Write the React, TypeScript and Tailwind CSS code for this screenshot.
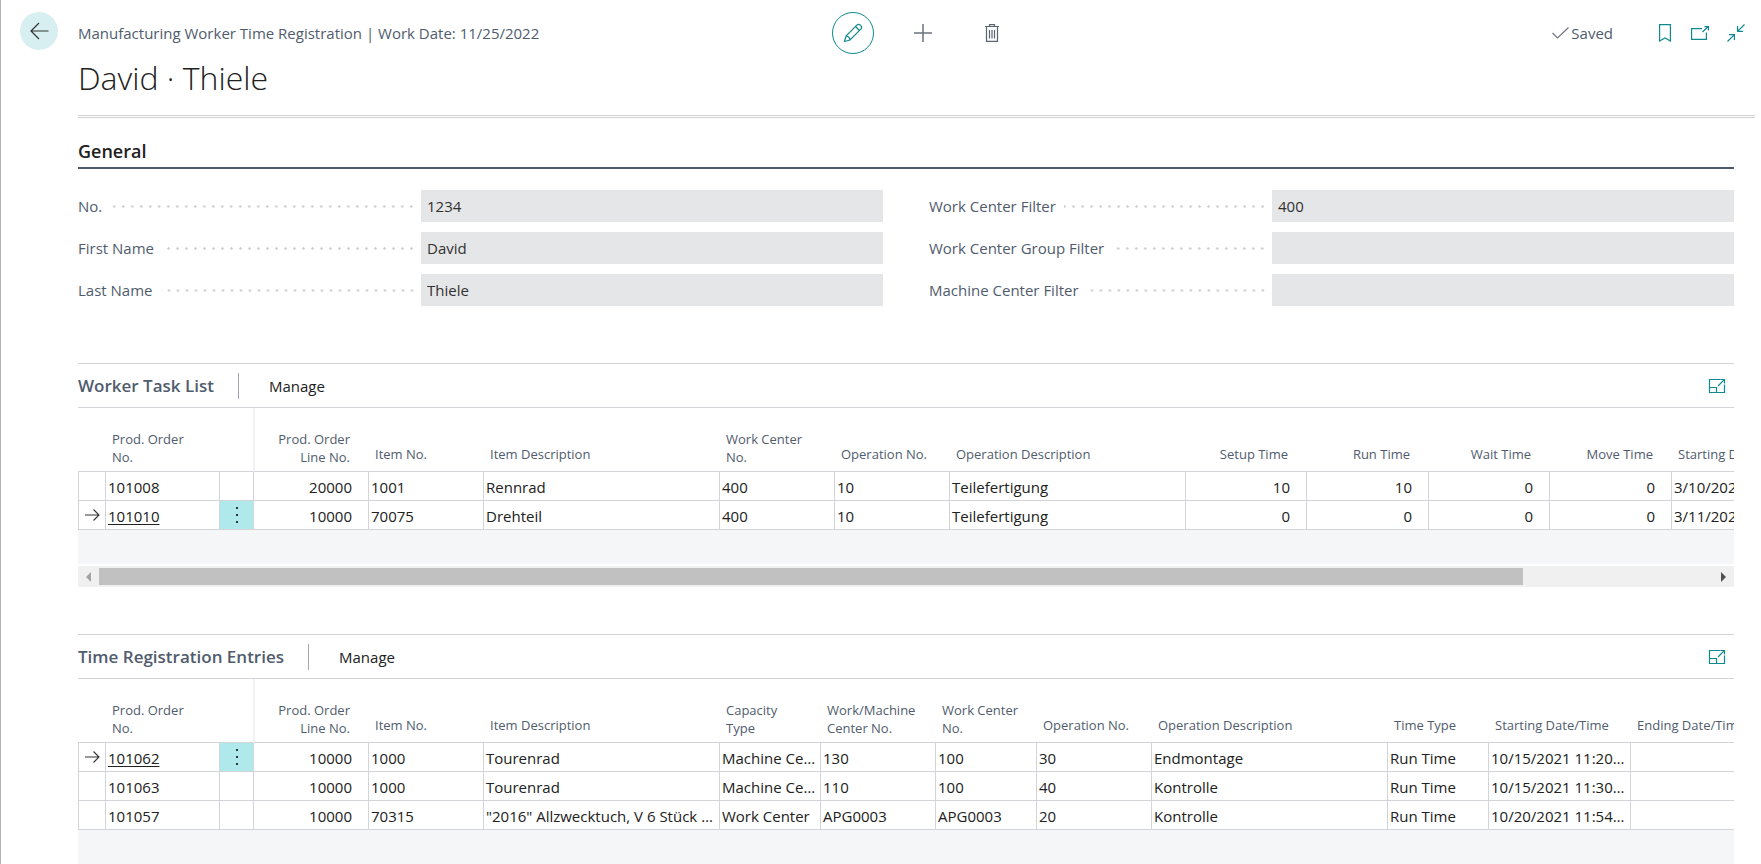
import { useState } from "react";
import clsx from "clsx";

type Column = {
  title: string[];
  width: string;
  align?: "right";
};

type Row = {
  no: string;
  cells: string[];
};

const taskColumns: Column[] = [
  { title: ["Prod. Order", "Line No."], width: "w-[115px]", align: "right" },
  { title: ["Item No."], width: "w-[115px]" },
  { title: ["Item Description"], width: "w-[236px]" },
  { title: ["Work Center", "No."], width: "w-[115px]" },
  { title: ["Operation No."], width: "w-[115px]" },
  { title: ["Operation Description"], width: "w-[236px]" },
  { title: ["Setup Time"], width: "w-[121px]", align: "right" },
  { title: ["Run Time"], width: "w-[122px]", align: "right" },
  { title: ["Wait Time"], width: "w-[121px]", align: "right" },
  { title: ["Move Time"], width: "w-[122px]", align: "right" },
  { title: ["Starting Date/Time"], width: "w-[142px]" },
];

const taskRows: Row[] = [
  {
    no: "101008",
    cells: ["20000", "1001", "Rennrad", "400", "10", "Teilefertigung", "10", "10", "0", "0", "3/10/2021 8:00"],
  },
  {
    no: "101010",
    cells: ["10000", "70075", "Drehteil", "400", "10", "Teilefertigung", "0", "0", "0", "0", "3/11/2021 8:00"],
  },
];

const entryColumns: Column[] = [
  { title: ["Prod. Order", "Line No."], width: "w-[115px]", align: "right" },
  { title: ["Item No."], width: "w-[115px]" },
  { title: ["Item Description"], width: "w-[236px]" },
  { title: ["Capacity", "Type"], width: "w-[101px]" },
  { title: ["Work/Machine", "Center No."], width: "w-[115px]" },
  { title: ["Work Center", "No."], width: "w-[101px]" },
  { title: ["Operation No."], width: "w-[115px]" },
  { title: ["Operation Description"], width: "w-[236px]" },
  { title: ["Time Type"], width: "w-[101px]" },
  { title: ["Starting Date/Time"], width: "w-[142px]" },
  { title: ["Ending Date/Time"], width: "w-[142px]" },
];

const entryRows: Row[] = [
  {
    no: "101062",
    cells: ["10000", "1000", "Tourenrad", "Machine Center", "130", "100", "30", "Endmontage", "Run Time", "10/15/2021 11:20 AM", ""],
  },
  {
    no: "101063",
    cells: ["10000", "1000", "Tourenrad", "Machine Center", "110", "100", "40", "Kontrolle", "Run Time", "10/15/2021 11:30 AM", ""],
  },
  {
    no: "101057",
    cells: ["10000", "70315", "\"2016\" Allzwecktuch, V 6 Stück Pack", "Work Center", "APG0003", "APG0003", "20", "Kontrolle", "Run Time", "10/20/2021 11:54 AM", ""],
  },
];

const leftFields = [
  { id: "no", label: "No.", value: "1234" },
  { id: "first-name", label: "First Name", value: "David" },
  { id: "last-name", label: "Last Name", value: "Thiele" },
];

const rightFields = [
  { id: "wc-filter", label: "Work Center Filter", value: "400" },
  { id: "wc-group-filter", label: "Work Center Group Filter", value: "" },
  { id: "mc-filter", label: "Machine Center Filter", value: "" },
];

function ExpandIcon() {
  return (
    <svg width="18" height="16" viewBox="0 0 18 16" fill="none" stroke="#0f8a8f" strokeWidth="1.2">
      <path d="M12 1.5H1.5V14.5H16.5V6.5" />
      <path d="M1.5 9.5H8.5V14.5" />
      <path d="M10 8L16 1.8M12.2 1.5H16.5V5.5" />
    </svg>
  );
}

function Field({ id, label, value }: { id: string; label: string; value: string }) {
  return (
    <div className="flex h-8 items-center">
      <div className="flex w-[343px] shrink-0 items-center gap-2 pr-[5px]">
        <label htmlFor={id} className="whitespace-nowrap text-[#505c6d]">
          {label}
        </label>
        <span className="h-[3px] flex-1 bg-[radial-gradient(circle,#cfd1d4_1px,transparent_1.5px)] bg-[length:9px_3px] bg-right bg-repeat-x" />
      </div>
      <input
        id={id}
        readOnly
        defaultValue={value}
        className="h-8 min-w-0 flex-1 bg-[#e5e6e8] px-1.5 text-[#323130] outline-none"
      />
    </div>
  );
}

function ListPart({
  title,
  columns,
  rows,
  initial,
}: {
  title: string;
  columns: Column[];
  rows: Row[];
  initial: string;
}) {
  const [current, setCurrent] = useState(initial);

  return (
    <section>
      <div className="flex h-[45px] items-center border-y border-[#d2d4d7]">
        <h2 className="text-[17px] font-semibold text-[#505c6d]">{title}</h2>
        <span className="mr-[30px] ml-6 h-[26px] w-px bg-[#a3a8b0]" />
        <button type="button" className="text-[#212121]">
          Manage
        </button>
        <button type="button" aria-label={`Expand ${title}`} className="mr-2 ml-auto">
          <ExpandIcon />
        </button>
      </div>
      <div className="overflow-hidden bg-[#f5f6f8] pb-[34px]">
        <table className="w-[1800px] table-fixed border-separate border-spacing-0 bg-white">
          <thead>
            <tr className="h-16 text-left align-bottom text-[13px] leading-[18px] text-[#505c6d]">
              <th className="w-[27px] border-b border-[#d2d4d7]" />
              <th className="w-[114px] border-b border-[#d2d4d7] pb-[5px] pl-[7px] font-normal">
                Prod. Order
                <br />
                No.
              </th>
              <th className="w-[34px] border-b border-[#d2d4d7]" />
              {columns.map(({ title, width, align }, i) => (
                <th
                  key={i}
                  className={clsx(
                    "border-b border-b-[#d2d4d7] font-normal whitespace-nowrap",
                    width,
                    align === "right" ? "pr-[18px] text-right" : "pl-[7px]",
                    title.length > 1 ? "pb-[5px]" : "pb-2",
                    i === 0 && "border-l-2 border-l-[#f1f2f4]"
                  )}
                >
                  {title[0]}
                  {title[1] && <br />}
                  {title[1]}
                </th>
              ))}
              <th className="border-b border-[#d2d4d7]" />
            </tr>
          </thead>
          <tbody>
            {rows.map(({ no, cells }) => {
              const selected = no === current;
              return (
                <tr key={no} className="h-[29px] text-[#212121]" onClick={() => setCurrent(no)}>
                  <td className="border-b border-l border-[#d2d4d7]">
                    {selected && (
                      <svg className="mx-auto" width="15" height="14" viewBox="0 0 15 14" fill="none" stroke="#333" strokeWidth="1.1">
                        <path d="M0 7H14M8.5 1.5L14 7L8.5 12.5" />
                      </svg>
                    )}
                  </td>
                  <td className="border-b border-l border-[#d2d4d7] pt-0.5 pl-0.5">
                    <a href="#" className={clsx(selected && "underline underline-offset-2")}>
                      {no}
                    </a>
                  </td>
                  <td className={clsx("border-b border-l border-[#d2d4d7]", selected && "bg-[#b0e9ec]")}>
                    {selected && (
                      <button type="button" aria-label="Row options" className="flex w-full justify-center">
                        <svg width="4" height="18" viewBox="0 0 4 18" fill="#333">
                          <rect x="1" y="1" width="2" height="2" />
                          <rect x="1" y="8" width="2" height="2" />
                          <rect x="1" y="15" width="2" height="2" />
                        </svg>
                      </button>
                    )}
                  </td>
                  {cells.map((cell, i) => (
                    <td
                      key={i}
                      className={clsx(
                        "truncate border-b border-l border-[#d2d4d7] pt-0.5",
                        columns[i].align === "right" ? "pr-4 text-right" : "pr-[3px] pl-0.5"
                      )}
                    >
                      {cell}
                    </td>
                  ))}
                  <td className="border-b border-l border-[#d2d4d7]" />
                </tr>
              );
            })}
          </tbody>
        </table>
      </div>
    </section>
  );
}

function ScrollBar() {
  return (
    <div className="mt-0.5 flex h-[21px] items-center bg-[#f0f0f0]">
      <div className="flex w-[21px] justify-center">
        <svg width="5" height="10" viewBox="0 0 5 10" fill="#a3a3a3">
          <path d="M5 0V10L0 5Z" />
        </svg>
      </div>
      <div className="mr-[190px] h-[17px] flex-1 bg-[#c1c1c1]" />
      <div className="flex w-[21px] justify-center">
        <svg width="5" height="10" viewBox="0 0 5 10" fill="#505050">
          <path d="M0 0V10L5 5Z" />
        </svg>
      </div>
    </div>
  );
}

export default function App() {
  return (
    <div className="flex min-h-screen overflow-hidden border-l border-[#b3b3b3] bg-white font-['Open_Sans','Noto_Sans',sans-serif] text-[15px] leading-5">
      <div className="w-[77px] shrink-0 pt-3 pl-[19px]">
        <button type="button" aria-label="Back" className="flex size-[38px] items-center justify-center rounded-full bg-[#d8eff1]">
          <svg width="19" height="18" viewBox="0 0 19 18" fill="none" stroke="#333" strokeWidth="1.2">
            <path d="M18.5 9H1M9 1L1 9L9 17" />
          </svg>
        </button>
      </div>

      <div className="min-w-0 flex-1">
        <header className="mr-1.5 border-b-[3px] border-double border-[#d2d2d2] pt-3 pb-[17px]">
          <div className="grid grid-cols-[1fr_auto_1fr] items-center">
            <span className="whitespace-nowrap text-[#505c6d]">
              Manufacturing Worker Time Registration | Work Date: 11/25/2022
            </span>
            <div className="flex items-center pr-0.5">
              <button type="button" aria-label="Edit" className="flex size-[42px] items-center justify-center rounded-full border border-[#0f8a8f]">
                <svg width="20" height="20" viewBox="0 0 20 20" fill="none" stroke="#0f8a8f" strokeWidth="1.2">
                  <path d="M1.5 18.5L3 13L13.8 2.2C14.8 1.2 16.3 1.2 17.3 2.2L17.8 2.7C18.8 3.7 18.8 5.2 17.8 6.2L7 17L1.5 18.5Z" />
                  <path d="M3 13C5 13 7 15 7 17M12.5 3.5L16.5 7.5" />
                </svg>
              </button>
              <button type="button" aria-label="New" className="ml-10">
                <svg width="18" height="18" viewBox="0 0 18 18" fill="none" stroke="#6b7280" strokeWidth="1.5">
                  <path d="M9 0V18M0 9H18" />
                </svg>
              </button>
              <button type="button" aria-label="Delete" className="ml-[53px]">
                <svg width="14" height="18" viewBox="0 0 14 18" fill="none" stroke="#5b6472" strokeWidth="1.2">
                  <path d="M0 2.5H14M4.5 2.5V0.6H9.5V2.5M1.5 2.5V17.4H12.5V2.5" />
                  <path d="M4.5 6V14.5M7 6V14.5M9.5 6V14.5" />
                </svg>
              </button>
            </div>
            <div className="flex items-center justify-end pr-2.5">
              <svg width="17" height="12" viewBox="0 0 17 12" fill="none" stroke="#6b7280" strokeWidth="1.1">
                <path d="M0.5 6L5.5 11L16.5 0.5" />
              </svg>
              <span className="ml-0.5 text-[#505c6d]">Saved</span>
              <button type="button" aria-label="Bookmark" className="ml-[46px]">
                <svg width="12" height="18" viewBox="0 0 12 18" fill="none" stroke="#0f8a8f" strokeWidth="1.2">
                  <path d="M0.6 0.6H11.4V17L6 14L0.6 17Z" />
                </svg>
              </button>
              <button type="button" aria-label="Open in new window" className="ml-5">
                <svg width="18" height="14" viewBox="0 0 18 14" fill="none" stroke="#0f8a8f" strokeWidth="1.2">
                  <path d="M11 2.6H0.6V13.4H15.4V6.5" />
                  <path d="M11.5 6L17 0.8M13.5 0.6H17.4V4.5" />
                </svg>
              </button>
              <button type="button" aria-label="Collapse" className="ml-[18px]">
                <svg width="18" height="18" viewBox="0 0 18 18" fill="none" stroke="#0f8a8f" strokeWidth="1.2">
                  <path d="M17.5 0.5L10.6 7.4M10.6 2V7.4H16" />
                  <path d="M0.5 17.5L7.4 10.6M7.4 16V10.6H2" />
                </svg>
              </button>
            </div>
          </div>
          <h1 className="mt-1 text-[32px] leading-10 font-light text-[#212121]">David · Thiele</h1>
        </header>

        <main className="mr-[27px]">
          <section className="pt-[21px]">
            <h2 className="border-b-2 border-[#505870] pb-1 text-lg leading-6 font-semibold text-[#212121]">General</h2>
            <div className="mt-[21px] grid grid-cols-2 gap-x-[46px]">
              <div className="flex flex-col gap-2.5">
                {leftFields.map((field) => (
                  <Field key={field.id} {...field} />
                ))}
              </div>
              <div className="flex flex-col gap-2.5">
                {rightFields.map((field) => (
                  <Field key={field.id} {...field} />
                ))}
              </div>
            </div>
          </section>

          <div className="mt-[57px]">
            <ListPart title="Worker Task List" columns={taskColumns} rows={taskRows} initial="101010" />
            <ScrollBar />
          </div>

          <div className="mt-[47px]">
            <ListPart title="Time Registration Entries" columns={entryColumns} rows={entryRows} initial="101062" />
          </div>
        </main>
      </div>
    </div>
  );
}
